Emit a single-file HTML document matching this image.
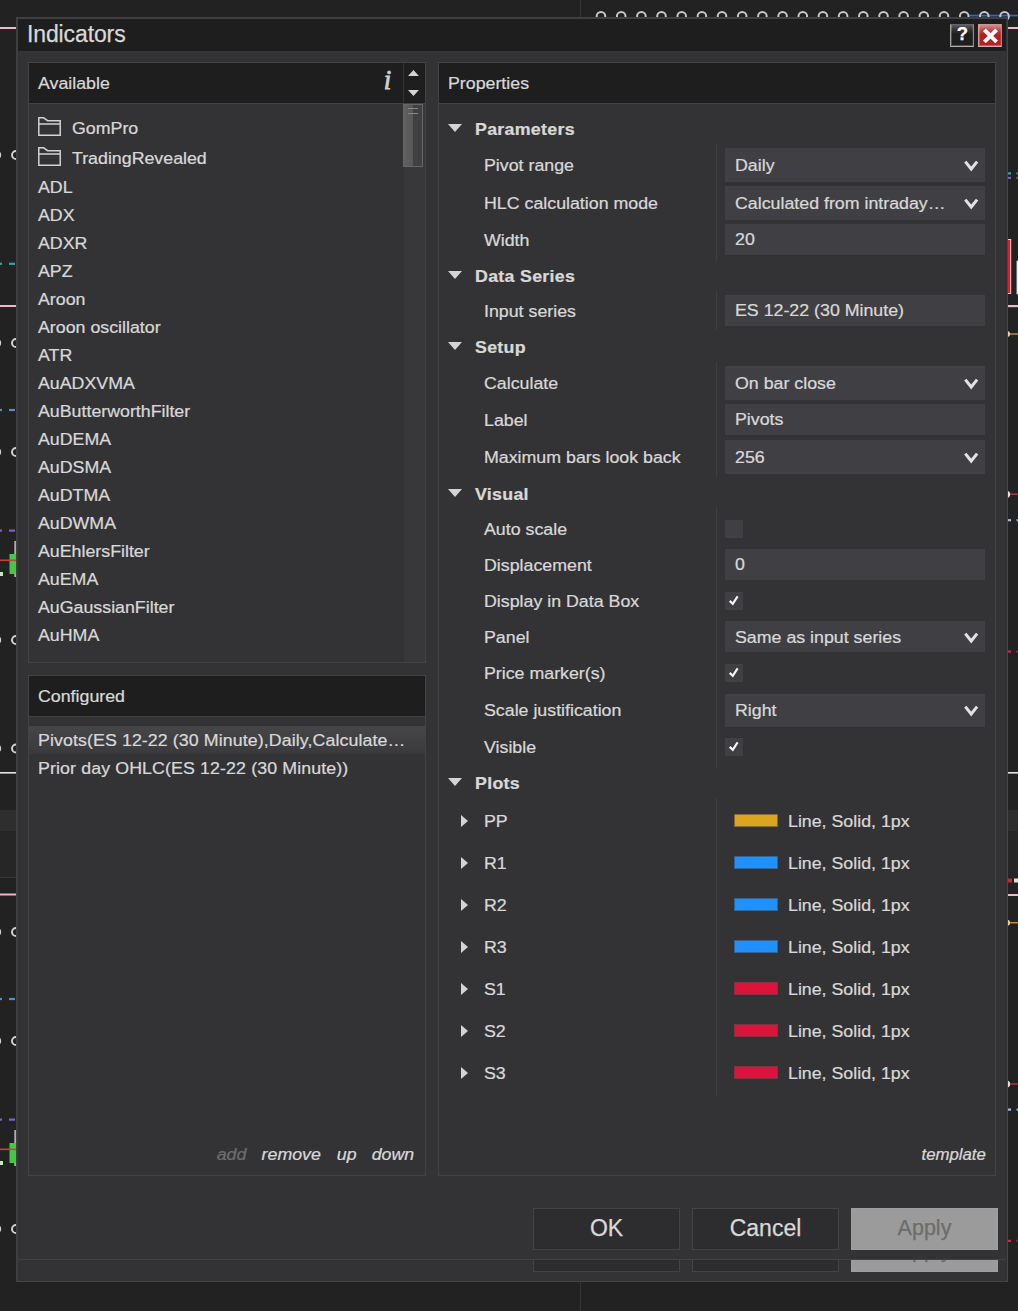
<!DOCTYPE html>
<html lang="en"><head><meta charset="utf-8"><title>Indicators</title>
<style>
html,body{margin:0;padding:0;}
body{width:1018px;height:1311px;background:#222;position:relative;overflow:hidden;font-family:"Liberation Sans",sans-serif;font-size:17.8px;color:#d8d8d8;}
.a{position:absolute;}
.t{position:absolute;white-space:nowrap;line-height:20px;height:20px;-webkit-text-stroke:0.25px currentColor;transform:scaleY(0.95);transform-origin:50% 62%;}
.ns{transform:none !important;}
.b{font-weight:bold;letter-spacing:0.3px;}
.i{font-style:italic;}
.fld{position:absolute;background:#404044;}
.cb{position:absolute;width:18px;height:18px;background:#404044;}
.pnl{position:absolute;border:1px solid #434345;box-sizing:border-box;}
.hdr{position:absolute;background:#1e1e1e;}
svg{position:absolute;overflow:visible;}
</style></head>
<body>
<svg class="a" style="left:0;top:0" width="1018" height="1311" viewBox="0 0 1018 1311">
<rect x="580" y="0" width="1" height="17" fill="#333"/>
<rect x="968" y="14.7" width="50" height="1.7" fill="#2b6cb5"/>
<circle cx="601.0" cy="16.3" r="4.3" fill="none" stroke="#c8c8c8" stroke-width="2"/>
<circle cx="621.2" cy="16.3" r="4.3" fill="none" stroke="#c8c8c8" stroke-width="2"/>
<circle cx="641.4" cy="16.3" r="4.3" fill="none" stroke="#c8c8c8" stroke-width="2"/>
<circle cx="661.5" cy="16.3" r="4.3" fill="none" stroke="#c8c8c8" stroke-width="2"/>
<circle cx="681.7" cy="16.3" r="4.3" fill="none" stroke="#c8c8c8" stroke-width="2"/>
<circle cx="701.9" cy="16.3" r="4.3" fill="none" stroke="#c8c8c8" stroke-width="2"/>
<circle cx="722.0" cy="16.3" r="4.3" fill="none" stroke="#c8c8c8" stroke-width="2"/>
<circle cx="742.2" cy="16.3" r="4.3" fill="none" stroke="#c8c8c8" stroke-width="2"/>
<circle cx="762.4" cy="16.3" r="4.3" fill="none" stroke="#c8c8c8" stroke-width="2"/>
<circle cx="782.6" cy="16.3" r="4.3" fill="none" stroke="#c8c8c8" stroke-width="2"/>
<circle cx="802.8" cy="16.3" r="4.3" fill="none" stroke="#c8c8c8" stroke-width="2"/>
<circle cx="822.9" cy="16.3" r="4.3" fill="none" stroke="#c8c8c8" stroke-width="2"/>
<circle cx="843.1" cy="16.3" r="4.3" fill="none" stroke="#c8c8c8" stroke-width="2"/>
<circle cx="863.3" cy="16.3" r="4.3" fill="none" stroke="#c8c8c8" stroke-width="2"/>
<circle cx="883.5" cy="16.3" r="4.3" fill="none" stroke="#c8c8c8" stroke-width="2"/>
<circle cx="903.6" cy="16.3" r="4.3" fill="none" stroke="#c8c8c8" stroke-width="2"/>
<circle cx="923.8" cy="16.3" r="4.3" fill="none" stroke="#c8c8c8" stroke-width="2"/>
<circle cx="944.0" cy="16.3" r="4.3" fill="none" stroke="#c8c8c8" stroke-width="2"/>
<circle cx="964.2" cy="16.3" r="4.3" fill="none" stroke="#c8c8c8" stroke-width="2"/>
<circle cx="984.3" cy="16.3" r="4.3" fill="none" stroke="#c8c8c8" stroke-width="2"/>
<circle cx="1004.5" cy="16.3" r="4.3" fill="none" stroke="#c8c8c8" stroke-width="2"/>
<rect x="0" y="27" width="16" height="2" fill="#f3b6c6"/>
<circle cx="16.1" cy="155" r="4.1" fill="none" stroke="#d0d0d0" stroke-width="2"/>
<circle cx="-3.9" cy="155" r="4.1" fill="none" stroke="#d0d0d0" stroke-width="2"/>
<rect x="0" y="262.7" width="2" height="2.2" fill="#2fa8a8"/><rect x="9" y="262.7" width="6" height="2.2" fill="#2fa8a8"/>
<rect x="0" y="305" width="16" height="2" fill="#f3b6c6"/>
<circle cx="16.1" cy="343" r="4.1" fill="none" stroke="#d0d0d0" stroke-width="2"/>
<circle cx="-3.9" cy="343" r="4.1" fill="none" stroke="#d0d0d0" stroke-width="2"/>
<rect x="0" y="408.9" width="2" height="2.2" fill="#4f8fd0"/><rect x="9" y="408.9" width="6" height="2.2" fill="#4f8fd0"/>
<circle cx="16.1" cy="452" r="4.1" fill="none" stroke="#d0d0d0" stroke-width="2"/>
<circle cx="-3.9" cy="452" r="4.1" fill="none" stroke="#d0d0d0" stroke-width="2"/>
<rect x="0" y="529.5" width="2" height="2.2" fill="#8060d0"/><rect x="9" y="529.5" width="6" height="2.2" fill="#8060d0"/>
<rect x="14.5" y="541" width="1.2" height="36" fill="#e8e8e8"/>
<rect x="9.5" y="554" width="6.5" height="20" fill="#45c845"/>
<rect x="0" y="559.5" width="16" height="1.6" fill="#c0443a"/>
<rect x="0" y="572" width="3" height="4" fill="#bfe8bf"/>
<circle cx="16.1" cy="640" r="4.1" fill="none" stroke="#d0d0d0" stroke-width="2"/>
<circle cx="-3.9" cy="640" r="4.1" fill="none" stroke="#d0d0d0" stroke-width="2"/>
<rect x="0" y="893.5" width="16" height="2" fill="#f3b6c6"/>
<circle cx="16.1" cy="932" r="4.1" fill="none" stroke="#d0d0d0" stroke-width="2"/>
<circle cx="-3.9" cy="932" r="4.1" fill="none" stroke="#d0d0d0" stroke-width="2"/>
<rect x="0" y="997.9" width="2" height="2.2" fill="#4f8fd0"/><rect x="9" y="997.9" width="6" height="2.2" fill="#4f8fd0"/>
<circle cx="16.1" cy="1041" r="4.1" fill="none" stroke="#d0d0d0" stroke-width="2"/>
<circle cx="-3.9" cy="1041" r="4.1" fill="none" stroke="#d0d0d0" stroke-width="2"/>
<rect x="0" y="1118.5" width="2" height="2.2" fill="#8060d0"/><rect x="9" y="1118.5" width="6" height="2.2" fill="#8060d0"/>
<rect x="14.5" y="1130" width="1.2" height="36" fill="#e8e8e8"/>
<rect x="9.5" y="1143" width="6.5" height="20" fill="#45c845"/>
<rect x="0" y="1148.5" width="16" height="1.6" fill="#c0443a"/>
<rect x="0" y="1161" width="3" height="4" fill="#bfe8bf"/>
<circle cx="16.1" cy="1229" r="4.1" fill="none" stroke="#d0d0d0" stroke-width="2"/>
<circle cx="-3.9" cy="1229" r="4.1" fill="none" stroke="#d0d0d0" stroke-width="2"/>
<circle cx="16.1" cy="748.5" r="4.1" fill="none" stroke="#d0d0d0" stroke-width="2"/>
<circle cx="-3.9" cy="748.5" r="4.1" fill="none" stroke="#d0d0d0" stroke-width="2"/>
<rect x="0" y="772" width="16" height="1.6" fill="#e4e4e4"/>
<rect x="0" y="810" width="16" height="21" fill="#2e2e2e"/>
<rect x="0" y="831" width="16" height="46" fill="#262626"/>
<rect x="0" y="877" width="16" height="1" fill="#343434"/>
<rect x="1008" y="27" width="10" height="2" fill="#f3b6c6"/>
<rect x="1008" y="172.3" width="3" height="2.2" fill="#2fa8a8"/><rect x="1016.6" y="172.3" width="2" height="2.2" fill="#2fa8a8"/>
<rect x="1008" y="176.8" width="3" height="2.2" fill="#7a5ccc"/><rect x="1016.6" y="176.8" width="2" height="2.2" fill="#7a5ccc"/>
<rect x="1008" y="239" width="3.2" height="55" fill="#f0c8c8"/><rect x="1008" y="240" width="2.2" height="53" fill="#d8202a"/>
<rect x="1016.6" y="260.7" width="2" height="33.6" fill="#f0f0f0"/>
<rect x="1008" y="305" width="10" height="2.2" fill="#f3b6c6"/>
<rect x="1008" y="333.3" width="10" height="1.4" fill="#d09030"/><circle cx="1007" cy="334" r="3" fill="#e8d8a0"/>
<rect x="1008" y="493.5" width="10" height="1.4" fill="#c83040"/><circle cx="1006.5" cy="494.3" r="3.6" fill="#e8e0e0"/>
<rect x="1008" y="519.1" width="3" height="2.2" fill="#a8bede"/><rect x="1016.6" y="519.1" width="2" height="2.2" fill="#a8bede"/>
<rect x="1008" y="650.5" width="3" height="2.2" fill="#d02840"/><rect x="1016.6" y="650.5" width="2" height="2.2" fill="#d02840"/>
<rect x="1008" y="772" width="10" height="1.6" fill="#e4e4e4"/>
<rect x="1008" y="810" width="10" height="21" fill="#2e2e2e"/>
<rect x="1008" y="831" width="10" height="46" fill="#262626"/>
<rect x="1008" y="878.5" width="4" height="4" fill="#d8202a"/><rect x="1014" y="878.5" width="4" height="4" fill="#cfe8cf"/>
<rect x="1008" y="894" width="10" height="2" fill="#f3b6c6"/>
<rect x="1008" y="922" width="10" height="1.4" fill="#d09030"/><circle cx="1007" cy="922.8" r="3" fill="#e8d8a0"/>
<rect x="1008" y="1083.3" width="10" height="1.4" fill="#c83040"/><circle cx="1006.5" cy="1084" r="3.6" fill="#e8e0e0"/>
<rect x="1008" y="1108.5" width="3" height="2.2" fill="#a8bede"/><rect x="1016.6" y="1108.5" width="2" height="2.2" fill="#a8bede"/>
<rect x="1008" y="1239.8" width="3" height="2.2" fill="#d02840"/><rect x="1016.6" y="1239.8" width="2" height="2.2" fill="#d02840"/>
<rect x="580" y="1281" width="1" height="30" fill="#333"/>
</svg>
<div class="a" style="left:16px;top:17px;width:992px;height:1265px;background:#333335;border:solid #3f3f41;border-width:2px 1px 1px 2px;border-right-color:#444446;border-bottom-color:#454547;box-sizing:border-box;"></div>
<div class="a" style="left:18px;top:19px;width:988px;height:32px;background:#1e1e1e;"></div>
<div class="t ns" style="left:27px;top:21px;font-size:23px;letter-spacing:-0.12px;line-height:26px;height:26px;">Indicators</div>
<div class="a" style="left:950px;top:24px;width:24px;height:23px;box-sizing:border-box;border:1px solid;border-color:#646464 #8a8a8a #b0b0b0 #a0a0a0;box-shadow:inset 1px -1px 0 rgba(255,255,255,.22),inset -1px 0 0 rgba(255,255,255,.08);background:linear-gradient(#5c5c5c 0,#353535 22%,#1f1d1d 45%,#1f1d1d 100%);"></div>
<div class="t b ns" style="left:950px;top:23px;width:25px;height:23px;line-height:22px;text-align:center;font-size:18.5px;color:#fff;">?</div>
<div class="a" style="left:978px;top:24px;width:24px;height:23px;box-sizing:border-box;border:1px solid;border-color:#c89898 #b88080 #d0b0b0 #c8a0a0;box-shadow:inset 1px -1px 0 rgba(255,255,255,.25),inset -1px 0 0 rgba(255,255,255,.1);background:linear-gradient(#d09090 0,#c05050 22%,#b32222 45%,#b32222 100%);"></div>
<svg style="left:978px;top:24px" width="24" height="23" viewBox="0 0 24 23"><path d="M6.4 5.8 L18.6 17.8 M18.6 5.8 L6.4 17.8" stroke="#fff" stroke-width="3.8" fill="none"/></svg>
<div class="a" style="left:18px;top:1259px;width:988px;height:1px;background:#414143;"></div>
<div class="pnl" style="left:28px;top:62px;width:398px;height:601px;"></div>
<div class="hdr" style="left:29px;top:63px;width:396px;height:40px;"></div>
<div class="a" style="left:29px;top:103px;width:396px;height:1px;background:#434345;"></div>
<div class="t " style="left:38px;top:73px;">Available</div>
<div class="t i ns" style="left:379.5px;top:65px;width:16px;text-align:center;font-family:'Liberation Serif',serif;font-size:27px;line-height:30px;height:30px;color:#d0d0d0;-webkit-text-stroke:0.8px #d0d0d0;">i</div>
<div class="a" style="left:403px;top:63px;width:1px;height:40px;background:#333335;"></div>
<div class="a" style="left:404px;top:104px;width:21px;height:558px;background:#38383a;"></div>
<svg style="left:404px;top:63px" width="21" height="40" viewBox="0 0 21 40"><path d="M4 13.1 L9.45 7 L14.9 13.1 Z M4 27 L9.45 33 L14.9 27 Z" fill="#d4d4d4"/></svg>
<div class="a" style="left:403px;top:104px;width:20px;height:63px;box-sizing:border-box;border:1px solid #666;background:linear-gradient(90deg,#606060 0,#585858 48%,#404040 50%,#404040 100%);"></div>
<div class="a" style="left:408px;top:108px;width:10px;height:1px;background:#888;"></div>
<div class="a" style="left:408px;top:113px;width:10px;height:1px;background:#888;"></div>
<svg style="left:38px;top:117px" width="23" height="19" viewBox="0 0 23 19"><path d="M0.8 18.2 V0.8 H5.6 L9.6 3.7 H22.2 V18.2 Z M0.8 7.1 H22.2" fill="none" stroke="#d2d2d2" stroke-width="1.5"/></svg>
<div class="t " style="left:72px;top:118px;">GomPro</div>
<svg style="left:38px;top:147px" width="23" height="19" viewBox="0 0 23 19"><path d="M0.8 18.2 V0.8 H5.6 L9.6 3.7 H22.2 V18.2 Z M0.8 7.1 H22.2" fill="none" stroke="#d2d2d2" stroke-width="1.5"/></svg>
<div class="t " style="left:72px;top:148px;">TradingRevealed</div>
<div class="t " style="left:38px;top:177px;">ADL</div>
<div class="t " style="left:38px;top:205px;">ADX</div>
<div class="t " style="left:38px;top:233px;">ADXR</div>
<div class="t " style="left:38px;top:261px;">APZ</div>
<div class="t " style="left:38px;top:289px;">Aroon</div>
<div class="t " style="left:38px;top:317px;">Aroon oscillator</div>
<div class="t " style="left:38px;top:345px;">ATR</div>
<div class="t " style="left:38px;top:373px;">AuADXVMA</div>
<div class="t " style="left:38px;top:401px;">AuButterworthFilter</div>
<div class="t " style="left:38px;top:429px;">AuDEMA</div>
<div class="t " style="left:38px;top:457px;">AuDSMA</div>
<div class="t " style="left:38px;top:485px;">AuDTMA</div>
<div class="t " style="left:38px;top:513px;">AuDWMA</div>
<div class="t " style="left:38px;top:541px;">AuEhlersFilter</div>
<div class="t " style="left:38px;top:569px;">AuEMA</div>
<div class="t " style="left:38px;top:597px;">AuGaussianFilter</div>
<div class="t " style="left:38px;top:625px;">AuHMA</div>
<div class="pnl" style="left:28px;top:675px;width:398px;height:501px;"></div>
<div class="hdr" style="left:29px;top:676px;width:396px;height:40px;"></div>
<div class="a" style="left:29px;top:716px;width:396px;height:1px;background:#434345;"></div>
<div class="t " style="left:38px;top:686px;">Configured</div>
<div class="a" style="left:29px;top:726px;width:396px;height:28px;background:linear-gradient(#464648,#3a3a3c);"></div>
<div class="t " style="left:38px;top:730px;letter-spacing:0.09px;">Pivots(ES 12-22 (30 Minute),Daily,Calculate…</div>
<div class="t " style="left:38px;top:758px;letter-spacing:0.11px;">Prior day OHLC(ES 12-22 (30 Minute))</div>
<div class="t i" style="left:216.7px;top:1144px;color:#6e6e6e;">add</div>
<div class="t i" style="left:261.6px;top:1144px;">remove</div>
<div class="t i" style="left:336.8px;top:1144px;">up</div>
<div class="t i" style="left:371.7px;top:1144px;">down</div>
<div class="pnl" style="left:438px;top:62px;width:558px;height:1114px;"></div>
<div class="hdr" style="left:439px;top:63px;width:556px;height:40px;"></div>
<div class="a" style="left:439px;top:103px;width:556px;height:1px;background:#434345;"></div>
<div class="t " style="left:448px;top:73px;">Properties</div>
<svg style="left:448px;top:124px" width="14" height="8" viewBox="0 0 14 8"><path d="M0 0 H14 L7 8 Z" fill="#d4d4d4"/></svg>
<div class="t b" style="left:475px;top:119px;">Parameters</div>
<div class="a" style="left:716px;top:144px;width:1px;height:116px;background:#3f3f41;"></div>
<div class="t " style="left:484px;top:155px;">Pivot range</div>
<div class="fld" style="left:725px;top:148px;width:260px;height:34px;"></div>
<div class="t " style="left:735px;top:155.0px;">Daily</div>
<svg style="left:963.6px;top:160.2px" width="15" height="12" viewBox="0 0 15 12"><path d="M1.3 1.6 L7.2 9 L13.1 1.6" fill="none" stroke="#e2e2e2" stroke-width="3"/></svg>
<div class="t " style="left:484px;top:193px;">HLC calculation mode</div>
<div class="fld" style="left:725px;top:186px;width:260px;height:33.69999999999999px;"></div>
<div class="t " style="left:735px;top:193px;">Calculated from intraday…</div>
<svg style="left:963.6px;top:198.04999999999998px" width="15" height="12" viewBox="0 0 15 12"><path d="M1.3 1.6 L7.2 9 L13.1 1.6" fill="none" stroke="#e2e2e2" stroke-width="3"/></svg>
<div class="t " style="left:484px;top:230px;">Width</div>
<div class="fld" style="left:725px;top:224px;width:260px;height:31px;"></div>
<div class="t " style="left:735px;top:229px;">20</div>
<svg style="left:448px;top:271px" width="14" height="8" viewBox="0 0 14 8"><path d="M0 0 H14 L7 8 Z" fill="#d4d4d4"/></svg>
<div class="t b" style="left:475px;top:266px;">Data Series</div>
<div class="a" style="left:716px;top:291px;width:1px;height:39px;background:#3f3f41;"></div>
<div class="t " style="left:484px;top:301px;">Input series</div>
<div class="fld" style="left:725px;top:295px;width:260px;height:31px;"></div>
<div class="t " style="left:735px;top:300px;">ES 12-22 (30 Minute)</div>
<svg style="left:448px;top:342px" width="14" height="8" viewBox="0 0 14 8"><path d="M0 0 H14 L7 8 Z" fill="#d4d4d4"/></svg>
<div class="t b" style="left:475px;top:337px;">Setup</div>
<div class="a" style="left:716px;top:362px;width:1px;height:115px;background:#3f3f41;"></div>
<div class="t " style="left:484px;top:373px;">Calculate</div>
<div class="fld" style="left:725px;top:366px;width:260px;height:34px;"></div>
<div class="t " style="left:735px;top:373.0px;">On bar close</div>
<svg style="left:963.6px;top:378.20000000000005px" width="15" height="12" viewBox="0 0 15 12"><path d="M1.3 1.6 L7.2 9 L13.1 1.6" fill="none" stroke="#e2e2e2" stroke-width="3"/></svg>
<div class="t " style="left:484px;top:410px;">Label</div>
<div class="fld" style="left:725px;top:404px;width:260px;height:31px;"></div>
<div class="t " style="left:735px;top:409px;">Pivots</div>
<div class="t " style="left:484px;top:447px;">Maximum bars look back</div>
<div class="fld" style="left:725px;top:440px;width:260px;height:34px;"></div>
<div class="t " style="left:735px;top:447.0px;">256</div>
<svg style="left:963.6px;top:452.20000000000005px" width="15" height="12" viewBox="0 0 15 12"><path d="M1.3 1.6 L7.2 9 L13.1 1.6" fill="none" stroke="#e2e2e2" stroke-width="3"/></svg>
<svg style="left:448px;top:489px" width="14" height="8" viewBox="0 0 14 8"><path d="M0 0 H14 L7 8 Z" fill="#d4d4d4"/></svg>
<div class="t b" style="left:475px;top:484px;">Visual</div>
<div class="a" style="left:716px;top:507px;width:1px;height:260px;background:#3f3f41;"></div>
<div class="t " style="left:484px;top:519px;">Auto scale</div>
<div class="cb" style="left:725px;top:520px;"></div>
<div class="t " style="left:484px;top:555px;">Displacement</div>
<div class="fld" style="left:725px;top:549px;width:260px;height:31px;"></div>
<div class="t " style="left:735px;top:554px;">0</div>
<div class="t " style="left:484px;top:591px;">Display in Data Box</div>
<div class="cb" style="left:725px;top:592px;"></div>
<svg style="left:725px;top:592px" width="18" height="18" viewBox="0 0 18 18"><path d="M4.7 8.9 L7.8 11.8 L12.6 4.4" fill="none" stroke="#f6f6f6" stroke-width="2.15"/></svg>
<div class="t " style="left:484px;top:627px;">Panel</div>
<div class="fld" style="left:725px;top:621px;width:260px;height:31px;"></div>
<div class="t " style="left:735px;top:626.5px;">Same as input series</div>
<svg style="left:963.6px;top:631.7px" width="15" height="12" viewBox="0 0 15 12"><path d="M1.3 1.6 L7.2 9 L13.1 1.6" fill="none" stroke="#e2e2e2" stroke-width="3"/></svg>
<div class="t " style="left:484px;top:663px;">Price marker(s)</div>
<div class="cb" style="left:725px;top:664px;"></div>
<svg style="left:725px;top:664px" width="18" height="18" viewBox="0 0 18 18"><path d="M4.7 8.9 L7.8 11.8 L12.6 4.4" fill="none" stroke="#f6f6f6" stroke-width="2.15"/></svg>
<div class="t " style="left:484px;top:700px;">Scale justification</div>
<div class="fld" style="left:725px;top:693.5px;width:260px;height:33.5px;"></div>
<div class="t " style="left:735px;top:700px;">Right</div>
<svg style="left:963.6px;top:705.45px" width="15" height="12" viewBox="0 0 15 12"><path d="M1.3 1.6 L7.2 9 L13.1 1.6" fill="none" stroke="#e2e2e2" stroke-width="3"/></svg>
<div class="t " style="left:484px;top:737px;">Visible</div>
<div class="cb" style="left:725px;top:738px;"></div>
<svg style="left:725px;top:738px" width="18" height="18" viewBox="0 0 18 18"><path d="M4.7 8.9 L7.8 11.8 L12.6 4.4" fill="none" stroke="#f6f6f6" stroke-width="2.15"/></svg>
<svg style="left:448px;top:778px" width="14" height="8" viewBox="0 0 14 8"><path d="M0 0 H14 L7 8 Z" fill="#d4d4d4"/></svg>
<div class="t b" style="left:475px;top:773px;">Plots</div>
<div class="a" style="left:716px;top:798px;width:1px;height:298px;background:#3f3f41;"></div>
<svg style="left:461px;top:815px" width="7" height="12" viewBox="0 0 7 12"><path d="M0 0 L7 6 L0 12 Z" fill="#d4d4d4"/></svg>
<div class="t " style="left:484px;top:811px;">PP</div>
<div class="a" style="left:734px;top:814px;width:44px;height:13px;background:#daa520;box-sizing:border-box;border:1px solid rgba(70,70,70,.6);"></div>
<div class="t " style="left:788px;top:811px;">Line, Solid, 1px</div>
<svg style="left:461px;top:857px" width="7" height="12" viewBox="0 0 7 12"><path d="M0 0 L7 6 L0 12 Z" fill="#d4d4d4"/></svg>
<div class="t " style="left:484px;top:853px;">R1</div>
<div class="a" style="left:734px;top:856px;width:44px;height:13px;background:#1e90ff;box-sizing:border-box;border:1px solid rgba(70,70,70,.6);"></div>
<div class="t " style="left:788px;top:853px;">Line, Solid, 1px</div>
<svg style="left:461px;top:899px" width="7" height="12" viewBox="0 0 7 12"><path d="M0 0 L7 6 L0 12 Z" fill="#d4d4d4"/></svg>
<div class="t " style="left:484px;top:895px;">R2</div>
<div class="a" style="left:734px;top:898px;width:44px;height:13px;background:#1e90ff;box-sizing:border-box;border:1px solid rgba(70,70,70,.6);"></div>
<div class="t " style="left:788px;top:895px;">Line, Solid, 1px</div>
<svg style="left:461px;top:941px" width="7" height="12" viewBox="0 0 7 12"><path d="M0 0 L7 6 L0 12 Z" fill="#d4d4d4"/></svg>
<div class="t " style="left:484px;top:937px;">R3</div>
<div class="a" style="left:734px;top:940px;width:44px;height:13px;background:#1e90ff;box-sizing:border-box;border:1px solid rgba(70,70,70,.6);"></div>
<div class="t " style="left:788px;top:937px;">Line, Solid, 1px</div>
<svg style="left:461px;top:983px" width="7" height="12" viewBox="0 0 7 12"><path d="M0 0 L7 6 L0 12 Z" fill="#d4d4d4"/></svg>
<div class="t " style="left:484px;top:979px;">S1</div>
<div class="a" style="left:734px;top:982px;width:44px;height:13px;background:#dc143c;box-sizing:border-box;border:1px solid rgba(70,70,70,.6);"></div>
<div class="t " style="left:788px;top:979px;">Line, Solid, 1px</div>
<svg style="left:461px;top:1025px" width="7" height="12" viewBox="0 0 7 12"><path d="M0 0 L7 6 L0 12 Z" fill="#d4d4d4"/></svg>
<div class="t " style="left:484px;top:1021px;">S2</div>
<div class="a" style="left:734px;top:1024px;width:44px;height:13px;background:#dc143c;box-sizing:border-box;border:1px solid rgba(70,70,70,.6);"></div>
<div class="t " style="left:788px;top:1021px;">Line, Solid, 1px</div>
<svg style="left:461px;top:1067px" width="7" height="12" viewBox="0 0 7 12"><path d="M0 0 L7 6 L0 12 Z" fill="#d4d4d4"/></svg>
<div class="t " style="left:484px;top:1063px;">S3</div>
<div class="a" style="left:734px;top:1066px;width:44px;height:13px;background:#dc143c;box-sizing:border-box;border:1px solid rgba(70,70,70,.6);"></div>
<div class="t " style="left:788px;top:1063px;">Line, Solid, 1px</div>
<div class="t i" style="left:921.5px;top:1145px;font-size:16.8px;">template</div>
<div class="a" style="left:533px;top:1208px;width:147px;height:42px;background:#2d2d2f;box-sizing:border-box;border:1px solid #434345;"></div>
<div class="t ns" style="left:533px;top:1208px;width:147px;height:42px;line-height:40px;text-align:center;font-size:23px;">OK</div>
<div class="a" style="left:692px;top:1208px;width:147px;height:42px;background:#2d2d2f;box-sizing:border-box;border:1px solid #434345;"></div>
<div class="t ns" style="left:692px;top:1208px;width:147px;height:42px;line-height:40px;text-align:center;font-size:23px;">Cancel</div>
<div class="a" style="left:851px;top:1208px;width:147px;height:42px;background:#9b9b9b;box-sizing:border-box;border:1px solid #9f9f9f;"></div>
<div class="t ns" style="left:851px;top:1208px;width:147px;height:42px;line-height:40px;text-align:center;font-size:21.5px;color:#6c6c6c;">Apply</div>
<div class="a" style="left:533px;top:1260px;width:147px;height:12px;overflow:hidden;"><div class="a" style="left:0;top:-30px;width:147px;height:42px;background:#2d2d2f;box-sizing:border-box;border:1px solid #434345;"></div></div>
<div class="a" style="left:692px;top:1260px;width:147px;height:12px;overflow:hidden;"><div class="a" style="left:0;top:-30px;width:147px;height:42px;background:#2d2d2f;box-sizing:border-box;border:1px solid #434345;"></div></div>
<div class="a" style="left:851px;top:1260px;width:147px;height:12px;overflow:hidden;"><div class="a" style="left:0;top:-30px;width:147px;height:42px;background:#9b9b9b;box-sizing:border-box;border:1px solid #9f9f9f;"></div><div class="t ns" style="left:0;top:-30px;width:147px;height:42px;line-height:40px;text-align:center;font-size:21.5px;color:#6c6c6c;">Apply</div></div>
</body></html>
